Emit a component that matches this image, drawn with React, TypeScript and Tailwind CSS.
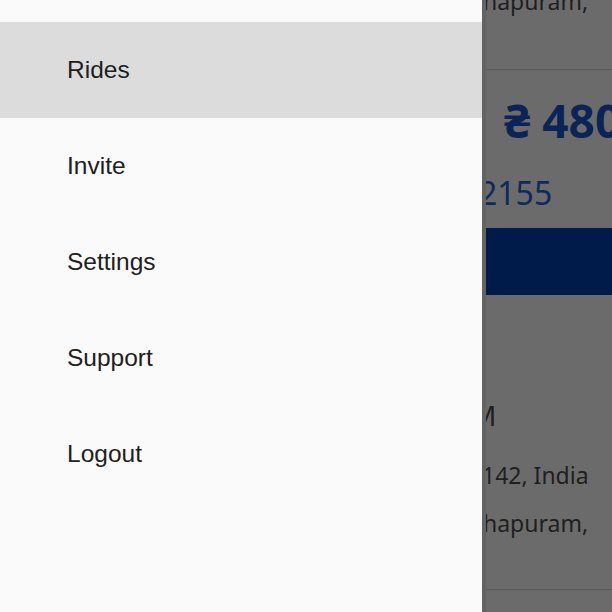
import React from "react";

const items = ["Rides", "Invite", "Settings", "Support", "Logout"];

export default function App() {
  return (
    <div className="flex h-[612px] w-[612px] overflow-hidden">
      <div
        className="flex h-full w-[482px] shrink-0 flex-col bg-[#fafafa] pt-[22px]"
        style={{ fontFamily: '"Liberation Sans", Arial, sans-serif' }}
      >
        {items.map((it, i) => (
          <div
            key={it}
            className={`flex h-[96px] items-center pl-[67px] text-[24.5px] text-[#202020] ${
              i === 0 ? "bg-[#dcdcdc]" : ""
            }`}
          >
            {it}
          </div>
        ))}
      </div>
      <div
        className="relative flex h-full flex-1 flex-col overflow-hidden bg-[#6b6b6b]"
        style={{ fontFamily: '"Noto Sans", "DejaVu Sans", sans-serif' }}
      >
        <div className="pointer-events-none absolute left-0 top-0 h-full w-[4px] bg-[#636363]" />
        <div className="h-[70px] shrink-0 border-b border-[#595959]">
          <div className="mt-[-13px] whitespace-nowrap pl-[1px] text-[23px] leading-[28px] text-[#1f1f1f]">
            hapuram,
          </div>
        </div>
        <div className="flex h-[88px] shrink-0 items-center whitespace-nowrap pl-[22px] pt-[12px] text-[46px] font-bold leading-none text-[#0b2456]">
          ₴ 4800
        </div>
        <div className="flex h-[70px] shrink-0 items-center whitespace-nowrap text-[32px] leading-none text-[#0e2a5c]">
          <span className="ml-[-3px]">2155</span>
        </div>
        <div className="h-[67px] shrink-0 bg-[#001b4a]" />
        <div className="h-[90px] shrink-0" />
        <div className="flex h-[60px] shrink-0 items-center whitespace-nowrap text-[28px] leading-none text-[#1f1f1f]">
          <span className="ml-[-11px]">M</span>
        </div>
        <div className="flex h-[60px] shrink-0 items-center whitespace-nowrap text-[23px] leading-none text-[#1f1f1f]">
          142, India
        </div>
        <div className="flex h-[36px] shrink-0 items-center whitespace-nowrap pl-[1px] text-[23px] leading-none text-[#1f1f1f]">
          hapuram,
        </div>
        <div className="h-[49px] shrink-0 border-b border-[#595959]" />
      </div>
    </div>
  );
}
